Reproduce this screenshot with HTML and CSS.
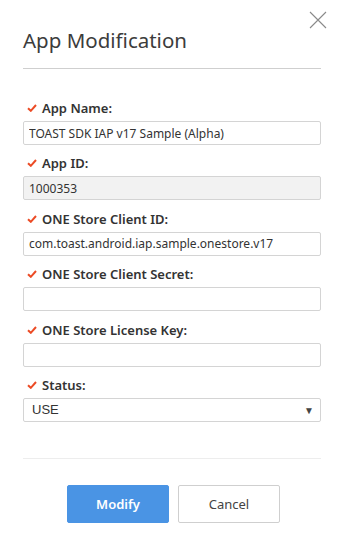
FILE: index.html
```html
<!DOCTYPE html>
<html lang="en">
<head>
  <meta charset="UTF-8">
  <meta name="viewport" content="width=device-width, initial-scale=1.0">
  <title>App Modification</title>
  <link rel="stylesheet" href="styles.css">
</head>
<body>

<div class="dialog">
  <div class="topbar">
    <button class="close-btn" title="Close">
      <svg width="18" height="18" viewBox="0 0 18 18">
        <path d="M1 1 L17 17 M17 1 L1 17" stroke="#8a8a8a" stroke-width="1.1" fill="none"/>
      </svg>
    </button>
  </div>

  <h1 class="title">App Modification</h1>

  <div class="form-body">
    <div class="field">
      <label class="field-label" for="appName"><svg class="check" width="10" height="8" viewBox="0 0 10 8"><path d="M1 4.2 L3.8 6.8 L9 1" /></svg>App Name:</label>
      <input type="text" id="appName" class="text-input" value="TOAST SDK IAP v17 Sample (Alpha)">
    </div>
    <div class="field">
      <label class="field-label" for="appId"><svg class="check" width="10" height="8" viewBox="0 0 10 8"><path d="M1 4.2 L3.8 6.8 L9 1" /></svg>App ID:</label>
      <input type="text" id="appId" class="text-input" value="1000353" readonly>
    </div>
    <div class="field">
      <label class="field-label" for="clientId"><svg class="check" width="10" height="8" viewBox="0 0 10 8"><path d="M1 4.2 L3.8 6.8 L9 1" /></svg>ONE Store Client ID:</label>
      <input type="text" id="clientId" class="text-input" value="com.toast.android.iap.sample.onestore.v17">
    </div>
    <div class="field">
      <label class="field-label" for="clientSecret"><svg class="check" width="10" height="8" viewBox="0 0 10 8"><path d="M1 4.2 L3.8 6.8 L9 1" /></svg>ONE Store Client Secret:</label>
      <input type="text" id="clientSecret" class="text-input">
    </div>
    <div class="field">
      <label class="field-label" for="licenseKey"><svg class="check" width="10" height="8" viewBox="0 0 10 8"><path d="M1 4.2 L3.8 6.8 L9 1" /></svg>ONE Store License Key:</label>
      <input type="text" id="licenseKey" class="text-input">
    </div>
    <div class="field">
      <label class="field-label" for="status"><svg class="check" width="10" height="8" viewBox="0 0 10 8"><path d="M1 4.2 L3.8 6.8 L9 1" /></svg>Status:</label>
      <div class="select-wrap">
        <select id="status" class="select-input">
          <option>USE</option>
          <option>STOP</option>
        </select>
        <span class="select-arrow">&#9660;</span>
      </div>
    </div>
  </div>

  <div class="footer">
    <button class="btn btn-primary">Modify</button>
    <button class="btn btn-default">Cancel</button>
  </div>
</div>

</body>
</html>
```

FILE: styles.css
```css
    body {
      margin: 0;
      background: #fff;
      font-family: "Noto Sans", "Open Sans", sans-serif;
      color: #333;
    }
    .dialog {
      padding: 0 17px 0 23px;
      width: 298px;
    }
    .topbar {
      display: flex;
      justify-content: flex-end;
      height: 28px;
      margin-right: -6px;
    }
    .close-btn {
      border: none;
      background: none;
      padding: 0;
      margin-top: 11px;
      width: 19px;
      height: 19px;
      cursor: pointer;
    }
    .title {
      margin: 0;
      font-size: 20.5px;
      font-weight: normal;
      line-height: 24px;
      height: 40px;
      color: #3c3c3c;
      border-bottom: 1px solid #cfcfcf;
    }
    .form-body {
      padding-top: 31px;
      padding-bottom: 36px;
      border-bottom: 1px solid #ededed;
    }
    .field {
      margin-bottom: 10.4px;
    }
    .field:last-child {
      margin-bottom: 0;
    }
    .field-label {
      display: flex;
      align-items: center;
      height: 16px;
      font-size: 13px;
      font-weight: 600;
      line-height: 16px;
      margin-bottom: 5px;
      padding-left: 4px;
      color: #333;
    }
    .check {
      margin-right: 5px;
      flex-shrink: 0;
    }
    .check path {
      fill: none;
      stroke: #ec4b25;
      stroke-width: 2;
    }
    .text-input,
    .select-input {
      display: block;
      box-sizing: border-box;
      width: 100%;
      height: 24px;
      margin: 0;
      border: 1px solid #d4d4d4;
      border-radius: 2px;
      padding: 0 5px;
      font-family: "Noto Sans", "Open Sans", sans-serif;
      font-size: 12px;
      color: #333;
      background: #fff;
      outline: none;
    }
    .text-input[readonly] {
      background: #f2f2f2;
    }
    .select-wrap {
      position: relative;
    }
    .select-input {
      -webkit-appearance: none;
      appearance: none;
      padding-left: 8px;
      font-family: "Liberation Sans", Arial, sans-serif;
      font-size: 13px;
    }
    .select-arrow {
      position: absolute;
      right: 7px;
      top: 6px;
      font-size: 10px;
      line-height: 12px;
      color: #444;
      pointer-events: none;
    }
    .footer {
      display: flex;
      justify-content: center;
      gap: 9px;
      padding-top: 26px;
      padding-left: 3px;
    }
    .btn {
      width: 102px;
      height: 38px;
      border-radius: 2px;
      font-family: "Noto Sans", "Open Sans", sans-serif;
      font-size: 13px;
      cursor: pointer;
    }
    .btn-primary {
      background: #4a94e4;
      border: 1px solid #4a94e4;
      color: #fff;
      font-weight: 600;
    }
    .btn-default {
      background: #fff;
      border: 1px solid #cfcfcf;
      color: #444;
    }
```
